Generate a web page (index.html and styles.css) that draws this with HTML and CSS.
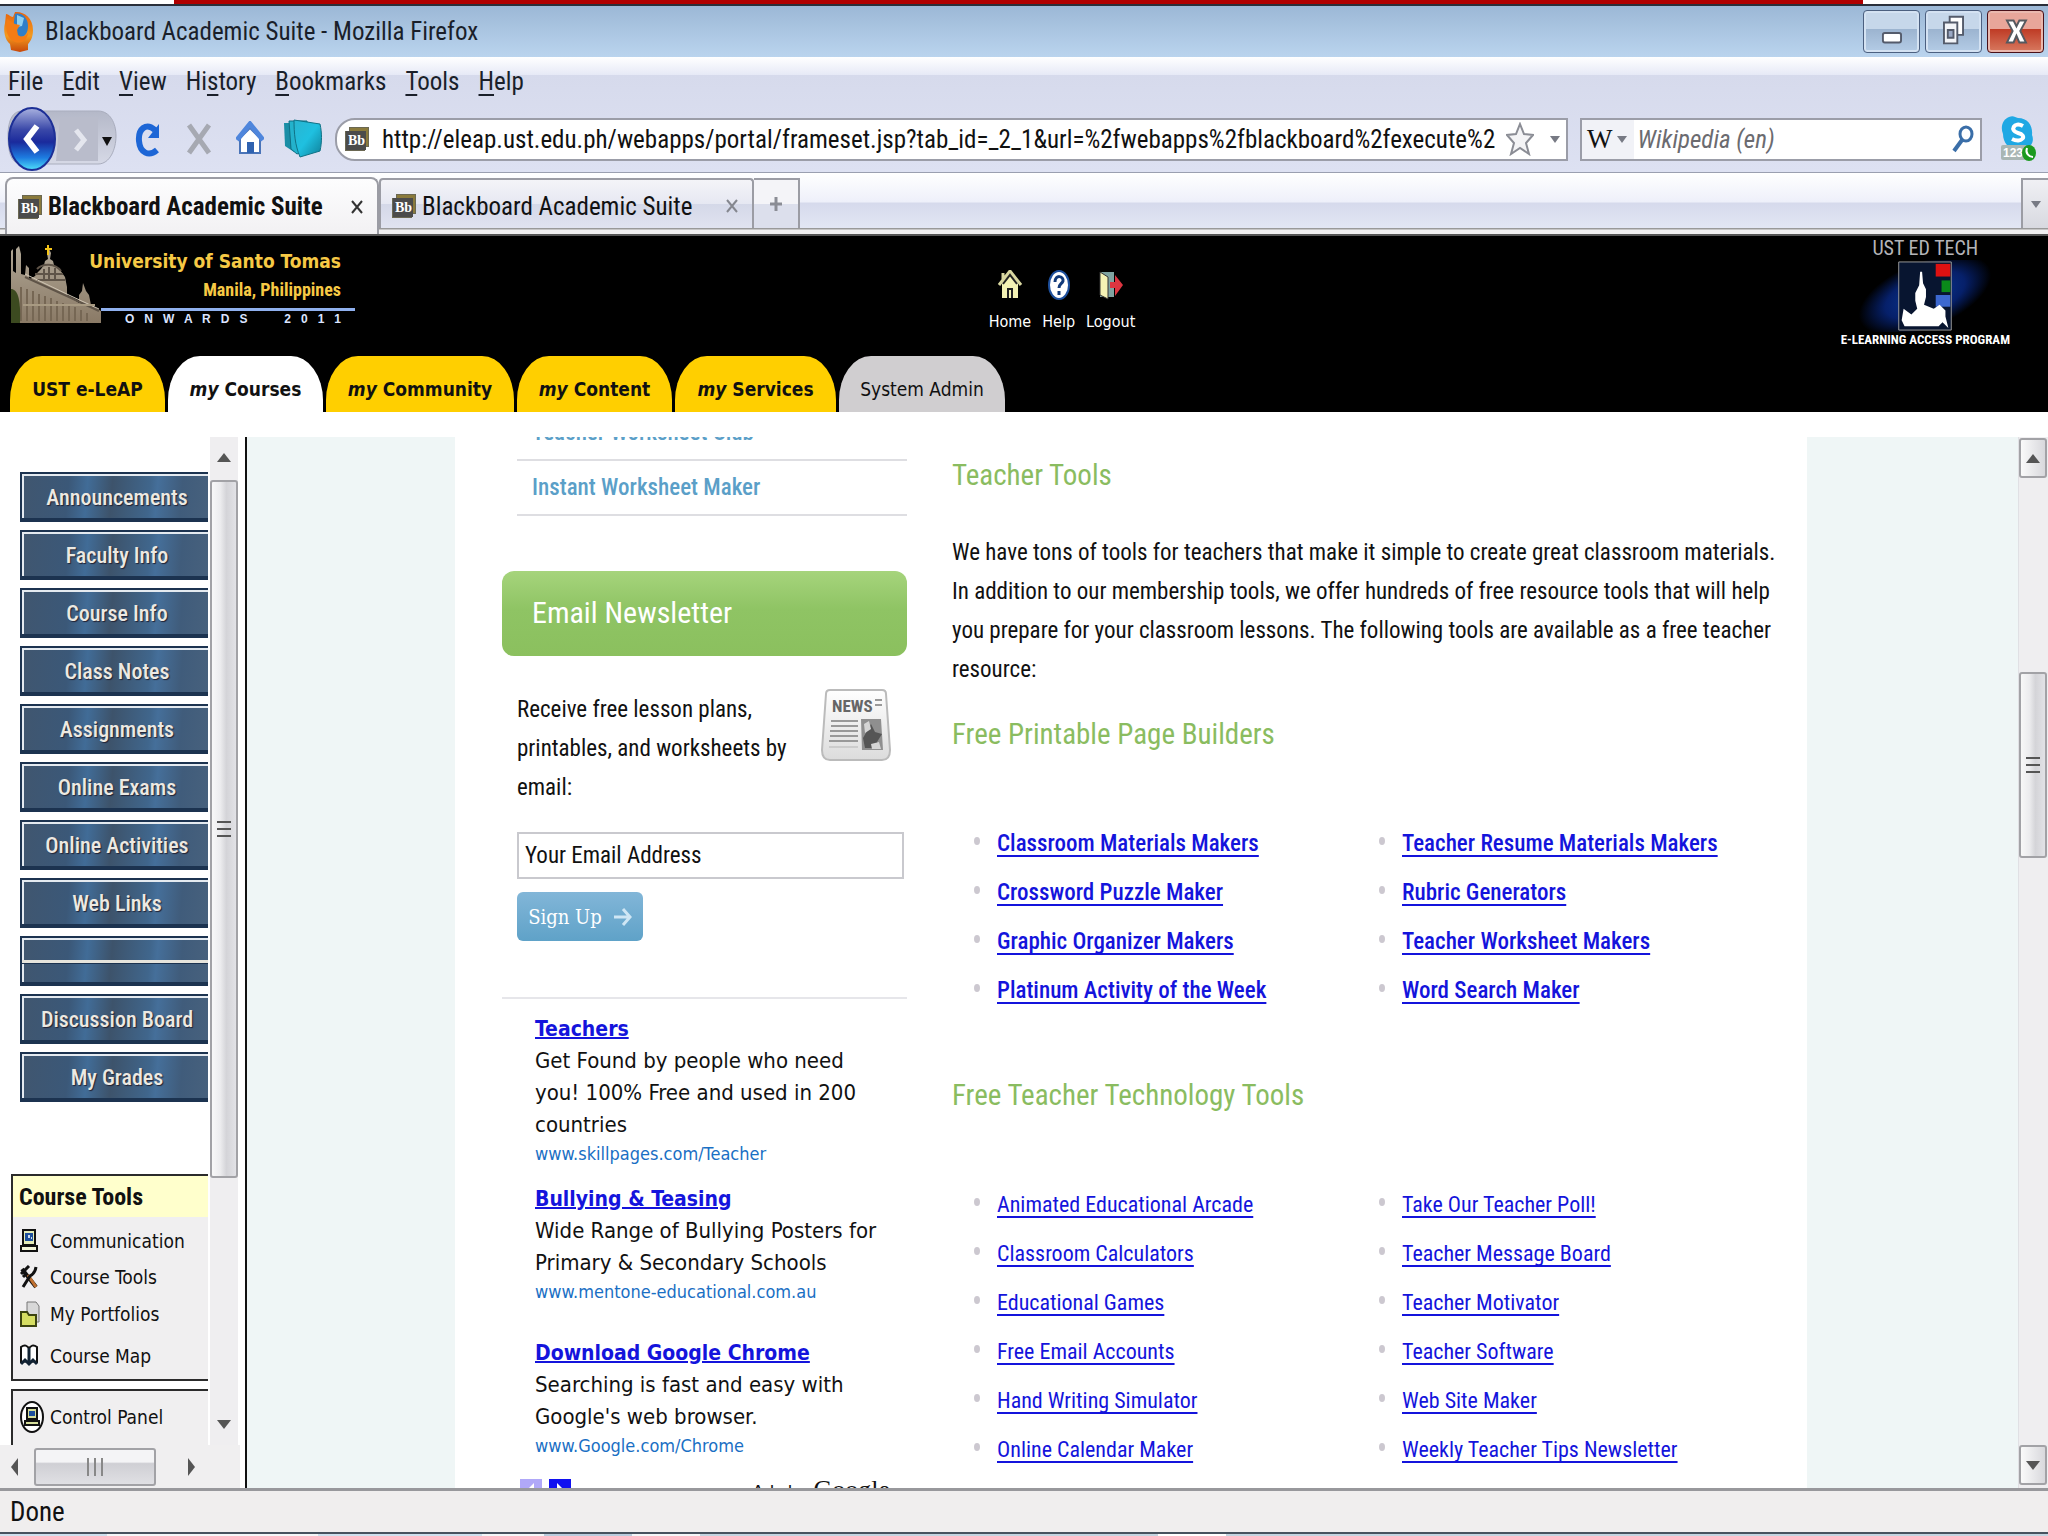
FILE: index.html
```html
<!DOCTYPE html>
<html lang="en">
<head>
<meta charset="utf-8">
<title>Blackboard Academic Suite - Mozilla Firefox</title>
<link rel="stylesheet" href="styles.css">
</head>
<body>
<svg width="0" height="0" class="defs" aria-hidden="true">
  <defs>
    <linearGradient id="orange" x1="0" y1="0" x2="0" y2="1"><stop offset="0" stop-color="#e8640c"/><stop offset=".6" stop-color="#f39a1e"/><stop offset="1" stop-color="#c8480a"/></linearGradient>
    <linearGradient id="orb" x1="0" y1="0" x2="0" y2="1"><stop offset="0" stop-color="#a9b2e0"/><stop offset=".35" stop-color="#3a48a8"/><stop offset=".55" stop-color="#1a2a9c"/><stop offset=".8" stop-color="#1d7be0"/><stop offset="1" stop-color="#4fe0fa"/></linearGradient>
    <linearGradient id="fwd" x1="0" y1="0" x2="0" y2="1"><stop offset="0" stop-color="#b4b8c8"/><stop offset="1" stop-color="#d6d9e6"/></linearGradient>
    <linearGradient id="teal" x1="0" y1="0" x2="1" y2="1"><stop offset="0" stop-color="#2ab4d0"/><stop offset=".5" stop-color="#1fc0e0"/><stop offset="1" stop-color="#0f7f98"/></linearGradient>
    <linearGradient id="stone" x1="0" y1="0" x2="0" y2="1"><stop offset="0" stop-color="#b0a695"/><stop offset="1" stop-color="#8a7a66"/></linearGradient>
    <radialGradient id="glow"><stop offset="0" stop-color="#0a3a9a"/><stop offset=".6" stop-color="#06206a"/><stop offset="1" stop-color="#000"/></radialGradient>
    <linearGradient id="paper" x1="0" y1="0" x2="0" y2="1"><stop offset="0" stop-color="#fff"/><stop offset="1" stop-color="#dcdcdc"/></linearGradient>
    <symbol id="bb" viewBox="0 0 24 24"><path d="M4 0h20v20h-4v4H0V4h4z" fill="#6b6852"/><path d="M5 1h18v18H5z" fill="#8a7a3c"/><path d="M1 4h20v19H1z" fill="#4b4b4b"/><text x="3" y="18" font-family="Liberation Serif, serif" font-weight="700" font-size="14" fill="#fff">Bb</text></symbol>
    <symbol id="pc" viewBox="0 0 18 24"><path d="M3 1h12v15H3z" fill="#e4ecb8" stroke="#111" stroke-width="2"/><path d="M5 4h8v8H5z" fill="#1d4f9c"/><path d="M8 6h2v3H8zM11 8h1v2h-1z" fill="#cde"/><path d="M1 17h16v5H1z" fill="#f2f4d8" stroke="#111" stroke-width="2"/></symbol>
  </defs>
</svg>

<div class="desktop-strip"></div>
<header class="titlebar">
  <svg class="fox" viewBox="0 0 32 42"><path d="M3 3c3 0 4 3 7 3l2-5c8-1 18 5 18 18 0 8-3 12-5 14v6l-8 2-9-2-1-6C2 29 0 20 2 12z" fill="url(#orange)"/><path d="M12 3c6-2 13 3 13 12 0 8-4 11-8 11-5 0-7-4-7-8z" fill="#2f7fc8"/><path d="M14 4l7 3-2 8-5 1z" fill="#8fd0f0"/><path d="M4 8l8 5 5 1-3 5 1 5c4 3 8 1 10-2-1 8-7 11-13 9C4 28 2 18 4 8z" fill="#f47c14"/></svg>
  <h1>Blackboard Academic Suite - Mozilla Firefox</h1>
  <div class="winbtns">
    <button type="button" aria-label="Minimize"><svg viewBox="0 0 56 43"><rect x="19" y="23" width="19" height="10" rx="2" fill="#fff" stroke="#545b6b" stroke-width="2"/></svg></button>
    <button type="button" aria-label="Restore"><svg viewBox="0 0 56 43"><path d="M24 6h14v19H24z" fill="#fff" stroke="#545b6b" stroke-width="2"/><path d="M18 12h14v22H18z" fill="#f2f4f8" stroke="#545b6b" stroke-width="2"/><path d="M22 20h6v8h-6z" fill="#9aa8c4" stroke="#545b6b" stroke-width="2"/></svg></button>
    <button type="button" class="close" aria-label="Close"><svg viewBox="0 0 56 43"><path d="M19 10h7l3 6 3-6h7l-6 11 6 12h-7l-3-7-3 7h-7l6-12z" fill="#fff" stroke="#55595f" stroke-width="2"/></svg></button>
  </div>
</header>

<div class="chrome">
  <nav class="menubar">
    <a href="#"><u>F</u>ile</a><a href="#"><u>E</u>dit</a><a href="#"><u>V</u>iew</a><a href="#">Hi<u>s</u>tory</a><a href="#"><u>B</u>ookmarks</a><a href="#"><u>T</u>ools</a><a href="#"><u>H</u>elp</a>
  </nav>
  <div class="toolbar">
    <button type="button" class="navpair" aria-label="Back and forward"><svg viewBox="0 0 114 66"><path d="M4 30C4 12 10 5 18 5h76c12 0 18 12 18 25s-6 28-18 28H18C8 58 4 48 4 30z" fill="url(#fwd)" stroke="#a9adbd"/><path d="M56 11h38v44H52z" fill="#b9bccb"/><path d="M72 24l8 10-8 10" fill="none" stroke="#e4e6ee" stroke-width="5"/><path d="M98 31h10l-5 9z" fill="#111"/><ellipse cx="28" cy="33" rx="23" ry="31" fill="url(#orb)" stroke="#1c2f96" stroke-width="2"/><path d="M33 20L23 33l10 13" fill="none" stroke="#fff" stroke-width="6"/></svg></button>
    <button type="button" class="tool" aria-label="Reload"><svg viewBox="0 0 26 36"><path d="M20 9C11 1 3 8 4 20c1 12 10 16 18 9" fill="none" stroke="#1d66d6" stroke-width="6"/><path d="M24 3v14H13z" fill="#1d66d6"/></svg></button>
    <button type="button" class="tool" aria-label="Stop"><svg viewBox="0 0 26 36"><path d="M3 4l20 28M23 4L3 32" stroke="#a6a9b2" stroke-width="5"/></svg></button>
    <button type="button" class="tool" aria-label="Home"><svg viewBox="0 0 28 36"><path d="M4 17L14 7l10 10v15H4z" fill="#fff" stroke="#4a74b8" stroke-width="2"/><path d="M1 19L14 3l13 16" fill="none" stroke="#4f86dc" stroke-width="5"/><path d="M11 21h7v11h-7z" fill="#2f62b0"/></svg></button>
    <button type="button" class="tool wide" aria-label="Bookmarks"><svg viewBox="0 0 40 40"><path d="M1 4h20l2 27-12 2-9-6z" fill="#1a8ea6"/><path d="M6 2h18v29l-10 4-6-5z" fill="#23b2cc" stroke="#0f6f84"/><path d="M11 1l26 4c2 9 2 18 0 27l-20 6c-5-12-6-24-6-37z" fill="url(#teal)" stroke="#0f7286"/></svg></button>
    <div class="urlbar">
      <svg class="bb"><use href="#bb"/></svg>
      <input type="text" aria-label="Address" value="http://eleap.ust.edu.ph/webapps/portal/frameset.jsp?tab_id=_2_1&amp;url=%2fwebapps%2fblackboard%2fexecute%2">
      <svg class="star" viewBox="0 0 28 34"><path d="M14 2l4 10 9 1-7 8 3 11-9-6-9 6 3-11-7-8 9-1z" fill="#f4f4f6" stroke="#8b8d95" stroke-width="2"/></svg>
      <svg class="caret" viewBox="0 0 10 8"><path d="M0 1h10L5 8z" fill="#777a84"/></svg>
    </div>
    <div class="search">
      <span class="engine"><b>W</b><svg class="caret" viewBox="0 0 10 8"><path d="M0 1h10L5 8z" fill="#777a84"/></svg></span>
      <input type="text" aria-label="Search" placeholder="Wikipedia (en)">
      <svg class="lens" viewBox="0 0 22 28"><ellipse cx="14" cy="9" rx="6" ry="7" fill="none" stroke="#3a6ea8" stroke-width="3"/><path d="M10 15L2 26" stroke="#3a6ea8" stroke-width="4"/></svg>
    </div>
    <button type="button" class="skype" aria-label="Skype"><svg viewBox="0 0 36 46"><path d="M9 1c4-2 6 0 9 1 10 0 15 8 14 17 3 7-2 14-9 13C12 36 3 29 3 18 0 11 3 3 9 1z" fill="#1fa8e4"/><path d="M23 10c-9-5-14 5-5 7 10 2 4 11-6 6" fill="none" stroke="#fff" stroke-width="4"/><rect x="1" y="29" width="26" height="15" rx="2" fill="#a9b6b4"/><text x="3" y="41" font-family="Liberation Sans, sans-serif" font-weight="700" font-size="12" fill="#fff">123</text><ellipse cx="29" cy="37" rx="7" ry="8" fill="#1b9a1f"/><path d="M27 32c-2 5 2 9 6 9" fill="none" stroke="#fff" stroke-width="2"/></svg></button>
  </div>
</div>

<div class="tabstrip">
  <div class="tab active"><svg class="bb"><use href="#bb"/></svg><span>Blackboard Academic Suite</span><button type="button" aria-label="Close tab"><svg viewBox="0 0 12 14"><path d="M1 1l10 12M11 1L1 13" stroke="#333" stroke-width="2"/></svg></button></div>
  <div class="tab"><svg class="bb"><use href="#bb"/></svg><span>Blackboard Academic Suite</span><button type="button" aria-label="Close tab"><svg viewBox="0 0 12 14"><path d="M1 1l10 12M11 1L1 13" stroke="#85878f" stroke-width="2"/></svg></button></div>
  <button type="button" class="newtab" aria-label="New tab"><svg viewBox="0 0 14 16"><path d="M7 1v14M1 8h12" stroke="#8b8d95" stroke-width="3"/></svg></button>
  <button type="button" class="alltabs" aria-label="List all tabs"><svg class="caret" viewBox="0 0 10 8"><path d="M0 1h10L5 8z" fill="#777a84"/></svg></button>
</div>

<section class="banner">
  <div class="brand">
    <svg class="church" viewBox="0 0 90 78"><path d="M0 6l2-2v22l3 2V4l3-3 2 8v20l4 1 1-10 3 3v12l6-4 3-4 3-3 3-4 1-4 3-2-1-6 2-4 2 4-1 6 3 2 1 4 6 5 5 7 2 10v8l12 8v-8l3-4 1-8 3 8 3 4 2 10 10 6v12H0z" fill="url(#stone)"/><path d="M26 24c6-6 18-6 24 2M24 29h28M26 35h28M33 24v12M38 22v14M44 23v13M14 32l44 20 30 14" fill="none" stroke="#5f5448" stroke-width="2"/><path d="M14 29l46 22 28 13" fill="none" stroke="#cfc5b4"/><path d="M10 42v34M16 44v32M22 46v30M28 49v27M34 51v25M40 53v23M46 56v20M52 58v18M58 60v16M64 62v14M70 65v11M76 68v8" stroke="#766754" stroke-width="2"/><path d="M12 60h72" stroke="#a89a82" stroke-width="2"/><path d="M36 0h2v3h3v2h-3v5h-2V5h-2V3h2z" fill="#f5c518"/><path d="M0 44c6 0 10 8 9 34H0z" fill="#3c4a20"/></svg>
    <div class="brandtext">
      <strong>University of Santo Tomas</strong>
      <b>Manila, Philippines</b>
      <div class="onwards"><span>O   N   W   A   R   D   S</span><span>2   0   1   1</span></div>
    </div>
  </div>
  <nav class="quick">
    <a href="#"><svg viewBox="0 0 24 30"><path d="M4 13l8-10 8 10v15H4z" fill="#f4f2b4"/><path d="M1 15L12 1l11 14M5 3v9" fill="none" stroke="#d9d7a0" stroke-width="3"/><path d="M5 14l7-9 7 9M10 28v-9h4v9" fill="none" stroke="#222" stroke-width="2"/></svg>Home</a>
    <a href="#"><svg viewBox="0 0 24 30"><ellipse cx="12" cy="15" rx="10" ry="14" fill="#fff" stroke="#1d4f9c" stroke-width="2"/><path d="M8 12c0-8 9-6 8-1-1 3-4 3-4 7M12 21v4" fill="none" stroke="#123a7a" stroke-width="3"/></svg>Help</a>
    <a href="#"><svg viewBox="0 0 26 30"><path d="M2 2h14v25H2z" fill="#7fa3a0"/><path d="M2 2l8 5v22l-8-4z" fill="#f4f2b4" stroke="#333"/><path d="M12 12h5V5l8 10-8 11v-8h-5z" fill="#dc3540"/></svg>Logout</a>
  </nav>
  <div class="edtech">
    <span>UST ED TECH</span>
    <svg viewBox="0 0 150 74"><ellipse cx="75" cy="36" rx="72" ry="34" transform="rotate(-22 75 36)" fill="url(#glow)"/><path d="M48 2h54v70H48z" fill="#081530" stroke="#999"/><path d="M86 4h15v13H86z" fill="#d11"/><path d="M92 21h9v12h-9z" fill="#0a8a1a"/><path d="M86 36h15v12H86z" fill="#3c68d0"/><path d="M70 12h2l1 12 3 6v8l-2 8 10 4 6-4 6 6v6l3 12-6-6-4 4H54l-3-6 2-12 8 6 6-6-2-8v-8l4-8z" fill="#fff"/></svg>
    <b>E-LEARNING ACCESS PROGRAM</b>
  </div>
  <nav class="sitetabs">
    <a href="#" class="t1">UST e-LeAP</a><a href="#" class="t1 on"><span><i>my</i> Courses</span></a><a href="#" class="t4"><span><i>my</i> Community</span></a><a href="#" class="t1"><span><i>my</i> Content</span></a><a href="#" class="t2"><span><i>my</i> Services</span></a><a href="#" class="t3 admin">System Admin</a>
  </nav>
</section>

<div class="frames">
  <aside class="side">
    <div class="sidetop">
      <div class="sidecontent">
        <nav class="coursemenu">
          <a href="#">Announcements</a><a href="#">Faculty Info</a><a href="#">Course Info</a><a href="#">Class Notes</a><a href="#">Assignments</a><a href="#">Online Exams</a><a href="#">Online Activities</a><a href="#">Web Links</a><div class="divider"></div><a href="#">Discussion Board</a><a href="#">My Grades</a>
        </nav>
        <section class="box">
          <h2>Course Tools</h2>
          <ul>
            <li><svg viewBox="0 0 18 24"><use href="#pc"/></svg><a href="#">Communication</a></li>
            <li><svg viewBox="0 0 18 24"><path d="M2 4l14 18" stroke="#111" stroke-width="4"/><path d="M8 10l8 12" stroke="#c07030" stroke-width="3"/><path d="M16 2c-1 6-4 8-6 9L3 22M1 9l8-8M3 12l3-3" fill="none" stroke="#111" stroke-width="3"/></svg><a href="#">Course Tools</a></li>
            <li class="tall"><svg viewBox="0 0 20 26"><path d="M7 1h9l3 4v16H7z" fill="#d8d8d8" stroke="#777"/><path d="M1 11h6l2 3h7v11H1z" fill="#d6de62" stroke="#3c4410" stroke-width="2"/></svg><a href="#">My Portfolios</a></li>
            <li><svg viewBox="0 0 18 24"><path d="M1 3c4-3 6-1 8 1 2-2 4-4 8-1v15c-4-1-6-1-8 1-2-2-4-2-8-1z" fill="#fff" stroke="#111" stroke-width="2"/><path d="M9 4v14M1 20l4-4 4 4 4-4 4 4" fill="none" stroke="#123" stroke-width="3"/></svg><a href="#">Course Map</a></li>
          </ul>
        </section>
        <section class="box panel">
          <svg viewBox="0 0 24 32"><ellipse cx="12" cy="16" rx="11" ry="15" fill="#fff" stroke="#111" stroke-width="2"/><path d="M7 7h10v11H7z" fill="#d6de9a" stroke="#111" stroke-width="2"/><path d="M9 10h6v5H9z" fill="#1d4f9c"/><path d="M5 20h14v4H5z" fill="#d6de9a" stroke="#111" stroke-width="2"/></svg><a href="#">Control Panel</a>
        </section>
      </div>
      <div class="vbar left"><i class="arrow up"></i><div class="thumb"></div><i class="arrow down"></i></div>
    </div>
    <div class="hbar"><i class="arrow lt"></i><div class="thumb"></div><i class="arrow rt"></i></div>
  </aside>
  <main class="page">
    <div class="sheet">
      <div class="colleft">
        <ul class="makers"><li><a href="#">Teacher Worksheet Club</a></li><li><a href="#">Instant Worksheet Maker</a></li></ul>
        <h2 class="green">Email Newsletter</h2>
        <form class="signup">
          <div class="blurb"><label for="email">Receive free lesson plans, printables, and worksheets by email:</label>
          <svg viewBox="0 0 70 78"><path d="M9 2h52q4 0 4 4l4 56q0 10-8 10H9q-8 0-8-10L5 6q0-4 4-4z" fill="url(#paper)" stroke="#bbb" stroke-width="2"/><text x="11" y="24" font-family="Roboto Condensed, Liberation Sans, sans-serif" font-weight="700" font-size="17" fill="#666">NEWS</text><path d="M54 12h7M54 17h7M10 33h27M10 38h27M9 43h28M9 48h28M8 53h29" stroke="#999" stroke-width="2"/><path d="M8 59h29" stroke="#ccc" stroke-width="2"/><path d="M40 31h20l2 31H41z" fill="#8f8f8f"/><path d="M42 50l8-14 4 8 7 2-5 8 3 6H44z" fill="#555"/><path d="M43 36l5-3 2 8-6 4zM50 56l8-2 2 7h-9z" fill="#d5d5d5"/></svg></div>
          <input id="email" type="text" value="Your Email Address">
          <button type="button">Sign Up <svg viewBox="0 0 18 20"><path d="M0 10h15M9 2l7 8-7 8" fill="none" stroke="#cfe6f4" stroke-width="3"/></svg></button>
        </form>
        <div class="ads">
          <article><a href="#">Teachers</a><p>Get Found by people who need you! 100% Free and used in 200 countries</p><cite>www.skillpages.com/Teacher</cite></article>
          <article><a href="#">Bullying &amp; Teasing</a><p>Wide Range of Bullying Posters for Primary &amp; Secondary Schools</p><cite>www.mentone-educational.com.au</cite></article>
          <article><a href="#">Download Google Chrome</a><p>Searching is fast and easy with Google's web browser.</p><cite>www.Google.com/Chrome</cite></article>
        </div>
        <div class="adnav"><button type="button" class="dim" aria-label="Previous ads"><svg viewBox="0 0 22 22"><path d="M14 4L7 11l7 7z" fill="#fff"/></svg></button><button type="button" aria-label="Next ads"><svg viewBox="0 0 22 22"><path d="M8 4l7 7-7 7z" fill="#fff"/></svg></button><span><small>Ads by</small> Google</span></div>
      </div>
      <div class="colright">
        <h2>Teacher Tools</h2>
        <p>We have tons of tools for teachers that make it simple to create great classroom materials. In addition to our membership tools, we offer hundreds of free resource tools that will help you prepare for your classroom lessons. The following tools are available as a free teacher resource:</p>
        <h3>Free Printable Page Builders</h3>
        <ul class="links strong">
          <li><a href="#">Classroom Materials Makers</a></li><li><a href="#">Teacher Resume Materials Makers</a></li>
          <li><a href="#">Crossword Puzzle Maker</a></li><li><a href="#">Rubric Generators</a></li>
          <li><a href="#">Graphic Organizer Makers</a></li><li><a href="#">Teacher Worksheet Makers</a></li>
          <li><a href="#">Platinum Activity of the Week</a></li><li><a href="#">Word Search Maker</a></li>
        </ul>
        <h3 class="second">Free Teacher Technology Tools</h3>
        <ul class="links">
          <li><a href="#">Animated Educational Arcade</a></li><li><a href="#">Take Our Teacher Poll!</a></li>
          <li><a href="#">Classroom Calculators</a></li><li><a href="#">Teacher Message Board</a></li>
          <li><a href="#">Educational Games</a></li><li><a href="#">Teacher Motivator</a></li>
          <li><a href="#">Free Email Accounts</a></li><li><a href="#">Teacher Software</a></li>
          <li><a href="#">Hand Writing Simulator</a></li><li><a href="#">Web Site Maker</a></li>
          <li><a href="#">Online Calendar Maker</a></li><li><a href="#">Weekly Teacher Tips Newsletter</a></li>
        </ul>
      </div>
    </div>
  </main>
  <div class="vbar right"><div class="cap"><i class="arrow up"></i></div><div class="thumb"></div><div class="cap"><i class="arrow down"></i></div></div>
</div>
<footer class="status">Done</footer>
<div class="taskbar"></div>
</body>
</html>
```
FILE: styles.css
```css
* { box-sizing: border-box; }
html, body { height: 100%; margin: 0; overflow: hidden; }
body {
  display: flex; flex-direction: column;
  font-family: "Roboto Condensed", "Liberation Sans", sans-serif;
  font-size: 25px; color: #111; background: #fff;
}
body > * { flex: none; }
.defs { position: absolute; }
button, input { font: inherit; color: inherit; border: 0; padding: 0; margin: 0; background: none; }
button { display: flex; align-items: center; justify-content: center; }
svg { display: block; flex: none; }
a { color: inherit; text-decoration: none; }
ul { list-style: none; margin: 0; padding: 0; }
h1, h2, h3, p { margin: 0; font-weight: 400; }
.bb { width: 24px; height: 24px; }
.caret { width: 10px; height: 8px; }

/* browser window */
.desktop-strip {
  height: 6px; border-bottom: 2px solid #2a2f3a;
  background: linear-gradient(90deg, #fff 0 174px, #b00000 174px calc(100% - 185px), #fff calc(100% - 185px));
}
.titlebar {
  display: flex; align-items: center; height: 51px; padding: 0 4px 0 3px; gap: 10px;
  background: linear-gradient(#9cb8d6, #bad4ee);
}
.fox { width: 32px; height: 42px; }
.titlebar h1 { font-size: 25px; flex: 1; color: #1a1f2a; }
.winbtns { display: flex; gap: 5px; }
.winbtns button {
  width: 57px; height: 43px; border: 1px solid #4c6080; border-radius: 4px;
  background: linear-gradient(#c6d7ea 0 45%, #9cb4d0 45%, #b4cce6);
  box-shadow: inset 0 0 0 2px #d4e2f2;
}
.winbtns .close { border-color: #4a1018; background: linear-gradient(#e8a69a 0 45%, #bf3c26 45%, #d87a60); box-shadow: inset 0 0 0 2px #eab8ae; }
.winbtns svg { width: 55px; height: 41px; }
.chrome {
  height: 116px; border-bottom: 1px solid #9a9fb0;
  background: linear-gradient(#fff, #e6e9f6 18px, #d6daec 18px, #dde1f2);
}
.menubar { display: flex; gap: 19px; padding: 9px 8px 0; height: 49px; line-height: 32px; color: #1a1f2a; }
.menubar u { text-underline-offset: 4px; text-decoration-thickness: 2px; }
.toolbar { display: flex; align-items: center; height: 66px; padding: 0 12px 0 4px; }
.navpair svg { width: 114px; height: 66px; }
.navpair { margin-right: 16px; }
.tool { width: 28px; height: 36px; margin-right: 23px; }
.tool svg { width: 28px; height: 36px; }
.tool.wide, .tool.wide svg { width: 40px; height: 40px; }
.tool.wide { margin-left: -4px; margin-right: 12px; }
.urlbar, .search { display: flex; align-items: center; height: 43px; border: 2px solid #9b9da8; background: #fff; }
.urlbar { flex: 1; min-width: 0; border-radius: 20px 0 0 20px; padding: 0 6px 0 8px; }
.urlbar input { flex: 1; min-width: 0; margin: 0 3px 0 13px; }
.star { width: 28px; height: 34px; margin-right: 16px; }
.search { width: 402px; margin: 0 18px 0 12px; padding-right: 6px; }
.engine { display: flex; align-items: center; gap: 5px; height: 39px; padding: 0 7px 0 5px; background: #f1f2f7; }
.engine b { font: 400 27px "Liberation Serif", serif; }
.search input { flex: 1; min-width: 0; margin-left: 3px; font-style: italic; }
.search input::placeholder { color: #6b6b70; opacity: 1; }
.lens { width: 22px; height: 28px; }
.skype svg { width: 36px; height: 46px; }

.tabstrip {
  display: flex; align-items: flex-end; height: 63px; padding: 0 0 6px 5px;
  border-bottom: 2px solid #555;
  background: linear-gradient(#fff, #eef0fa 29px, #d6daec 30px, #e2e6f4 55px, #999 55px 56px, #f1f0f1 57px);
}
.tab {
  display: flex; align-items: center; width: 375px; height: 50px; padding: 4px 14px 0 11px; gap: 6px;
  border: 2px solid #9b9ca4; border-bottom: 0; border-radius: 4px 4px 0 0;
  background: linear-gradient(#f4f4f8, #e6e8f2 50%, #d4d8e8 50%, #e0e3f0);
}
.tab span { flex: 1; }
.tab.active { width: 374px; height: 57px; margin-bottom: -6px; padding-top: 0; border-radius: 8px 8px 0 0; background: linear-gradient(#fdfdfe, #f2f1f3); font-weight: 700; }
.tab button svg { width: 12px; height: 14px; }
.newtab { width: 46px; height: 50px; border: 2px solid #9b9ca4; border-width: 2px 2px 0 0; background: linear-gradient(#f4f4f8 50%, #dcdfec 50%); }
.newtab svg { width: 14px; height: 16px; }
.alltabs { width: 27px; height: 50px; margin-left: auto; border: 2px solid #9b9ca4; border-width: 2px 0 0 2px; background: linear-gradient(#f0f0f4, #d8d9e0); }

/* university banner */
.banner {
  display: grid; grid-template-columns: 1fr auto 1fr; grid-template-rows: 120px 56px;
  height: 176px; background: #000; color: #fff; font-family: "DejaVu Sans Condensed", "DejaVu Sans", sans-serif;
}
.brand { display: flex; padding: 9px 0 0 11px; }
.church { width: 90px; height: 78px; }
.brandtext { display: flex; flex-direction: column; width: 254px; color: #f6c945; }
.brandtext strong, .brandtext b { text-align: right; padding-right: 14px; white-space: nowrap; }
.brandtext strong { font-size: 19px; line-height: 32px; align-self: flex-end; }
.brandtext b { font: 700 18px/26px "Roboto Condensed", sans-serif; height: 31px; }
.onwards {
  display: flex; justify-content: space-between; padding: 0 14px 0 24px; border-top: 3px solid #8fb0ee;
  font: 700 12px/16px "Liberation Sans", sans-serif; color: #dbe4ff; white-space: pre;
}
.quick { display: flex; gap: 11px; padding: 34px 0 0 76px; font-size: 16px; line-height: 24px; }
.quick a { display: flex; flex-direction: column; align-items: center; gap: 10px; }
.quick svg { height: 30px; width: 26px; }
.edtech { display: flex; flex-direction: column; align-items: center; justify-self: end; padding-right: 38px; color: #b4b4b8; }
.edtech span { font: 400 20px/24px "Roboto Condensed", sans-serif; }
.edtech svg { width: 150px; height: 72px; }
.edtech b { font: 700 13px/16px "Roboto Condensed", sans-serif; color: #fff; white-space: nowrap; }
.sitetabs { grid-column: 1 / -1; display: flex; gap: 3px; padding-left: 10px; font-size: 19px; font-weight: 700; color: #111; }
.sitetabs a {
  display: flex; align-items: center; justify-content: center; height: 56px; padding-top: 9px;
  border-radius: 32px 32px 0 0 / 44px 44px 0 0; background: #ffcf00; white-space: nowrap;
}
.t1 { width: 155px; }
.t2 { width: 161px; }
.t3 { width: 166px; }
.t4 { width: 188px; }
.sitetabs .on { background: #fff; }
.sitetabs .admin { background: #d0ced0; font-weight: 400; }

/* frames */
.frames { flex: 1 1 0; min-height: 0; display: flex; padding-top: 25px; }
.side { display: flex; flex-direction: column; width: 247px; border-right: 2px solid #111; }
.sidetop { flex: 1; min-height: 0; display: flex; }
.sidecontent { width: 208px; padding: 35px 0 0 11px; overflow: hidden; font-family: "DejaVu Sans Condensed", "DejaVu Sans", sans-serif; }
.coursemenu { display: flex; flex-direction: column; gap: 8px; margin-left: 9px; }
.coursemenu > * {
  height: 50px; border: solid #1c3350; border-width: 2px 0 4px 2px;
  background: linear-gradient(95deg, #40566f, #3b5878 25%, #416c97 35%, #3d536b 48%, #40668c 68%, #456f9a 72%, #405c7b 85%, #47617d);
  box-shadow: inset 2px 2px 0 #e4eaf0;
}
.coursemenu a { display: flex; align-items: center; justify-content: center; padding: 3px 0 0 4px; font: 500 22px "Roboto Condensed", sans-serif; color: #ece9e2; text-shadow: 1px 1px 1px #223; white-space: nowrap; }
.coursemenu .divider { padding-top: 22px; }
.divider::before { content: ""; display: block; height: 3px; background: #e6e4dc; border-bottom: 1px solid #1c3350; }
.box { border: solid #2b2b2b; border-width: 2px 0 2px 2px; background: #f0eff0; font-size: 19px; white-space: nowrap; }
.coursemenu + .box { margin-top: 72px; }
.box h2 { height: 41px; padding-left: 6px; background: #ffffcc; font: 700 24px/42px "Roboto Condensed", sans-serif; }
.box ul { padding: 6px 0 5px 7px; }
.box li { display: flex; align-items: center; height: 36px; gap: 12px; }
.box li svg { width: 18px; height: 24px; }
.box li.tall { height: 43px; gap: 10px; padding-bottom: 6px; }
.box li.tall svg { width: 20px; height: 26px; }
.panel { display: flex; align-items: center; height: 70px; margin-top: 8px; padding: 0 0 14px 7px; gap: 6px; }
.panel svg { width: 24px; height: 32px; }

.vbar { display: flex; flex-direction: column; align-items: center; justify-content: space-between; background: #efeef0; }
.thumb { border: 2px solid #a2a2a6; border-radius: 3px; display: flex; align-items: center; justify-content: center; }
.vbar .thumb { width: 100%; background: linear-gradient(90deg, #f8f8f8, #ececee 35%, #d4d4d8 60%, #e2e2e6); }
.vbar .thumb::before { content: ""; width: 14px; height: 16px; background: repeating-linear-gradient(#555 0 2px, transparent 2px 7px); }
.left { width: 28px; margin-left: 2px; padding: 16px 0; }
.left .thumb { flex: 1; margin: 18px 0 242px; }
.right { width: 30px; border-left: 1px solid #e0e0e4; padding: 1px 1px 3px 0; }
.right .thumb { height: 186px; margin: 194px 0 auto; }
.cap { display: flex; align-items: center; justify-content: center; width: 100%; height: 40px; border: 2px solid #a2a2a6; border-radius: 3px; background: linear-gradient(90deg, #fafafa, #d8d8dc); }
.arrow { width: 0; height: 0; border: 7px solid transparent; }
.up { border-bottom: 9px solid #555; border-top: 0; }
.down { border-top: 9px solid #555; border-bottom: 0; }
.lt, .rt { border-width: 9px 7px; }
.lt { border-right-color: #555; border-left: 0; }
.rt { border-left-color: #555; border-right: 0; }
.hbar { display: flex; align-items: center; height: 43px; width: 240px; padding: 2px 45px 2px 11px; background: #f0eff0; }
.hbar .thumb { width: 122px; height: 38px; margin: 0 auto 0 16px; background: linear-gradient(#f4f4f6 35%, #cfcfd4 40%, #e0e0e4); }
.hbar .thumb::before { content: ""; width: 16px; height: 18px; background: repeating-linear-gradient(90deg, #888 0 2px, transparent 2px 7px); }

.page { flex: 1; min-width: 0; padding: 0 211px 0 208px; background: #eff6f6; overflow: hidden; }
.sheet { display: flex; gap: 45px; height: 100%; padding: 0 25px 0 47px; background: #fff; }
.colleft { width: 405px; flex: none; margin-top: -31px; }
.makers { padding-left: 15px; }
.makers li { height: 55px; padding-left: 15px; border-bottom: 2px solid #dedee2; font-size: 23px; line-height: 54px; color: #5b9fc8; font-weight: 500; }
.green { height: 85px; margin-top: 55px; padding-left: 30px; border-radius: 12px; background: linear-gradient(#a6d47c, #8fc464 45%, #8bc05e); color: #fff; font-size: 30px; line-height: 84px; }
.signup { padding: 34px 3px 56px 15px; border-bottom: 2px solid #e6e6ea; }
.blurb { display: flex; justify-content: space-between; padding-right: 13px; height: 117px; }
.blurb label { width: 275px; font-size: 23px; line-height: 39px; }
.blurb svg { width: 70px; height: 78px; margin-top: -2px; }
.signup input { width: 100%; height: 47px; margin-top: 25px; padding: 0 6px; border: 2px solid #c9c9ce; font-size: 23px; }
.signup button { width: 126px; height: 49px; margin-top: 13px; gap: 12px; border-radius: 6px; background: linear-gradient(#82b6d8, #5fa2c8); color: #fff; font: 400 20px "DejaVu Serif Condensed", "DejaVu Serif", serif; white-space: nowrap; }
.signup button svg { width: 18px; height: 20px; }
.ads { padding: 14px 0 0 33px; font: 22px/32px "DejaVu Sans Condensed", "DejaVu Sans", sans-serif; }
.ads article { margin-bottom: 16px; }
.ads article:nth-child(2) { margin-bottom: 32px; }
.ads a { display: block; font-size: 21px; color: #1414dc; font-weight: 700; text-decoration: underline; text-decoration-thickness: 2px; }
.ads p { max-width: 345px; }
.ads cite { display: block; font-style: normal; font-size: 18px; line-height: 26px; color: #1a6fc4; }
.adnav { display: flex; gap: 7px; padding: 4px 17px 0 18px; }
.adnav button { width: 22px; height: 22px; background: #1010f0; }
.adnav .dim { background: #b0a8f8; }
.adnav svg { width: 22px; height: 22px; }
.adnav span { margin-left: auto; font: 26px/22px "Liberation Serif", serif; }
.adnav small { font: 18px/22px "Liberation Sans", sans-serif; }
.colright { flex: 1; min-width: 0; padding-top: 18px; }
.colright h2, .colright h3 { color: #8abc60; line-height: 40px; font-size: 29px; }
.colright h3 { margin-top: 25px; }
.colright .second { margin-top: 60px; }
.colright p { margin-top: 38px; max-width: 830px; font-size: 23px; line-height: 39px; }
.links { display: grid; grid-template-columns: 405px 405px; grid-auto-rows: 49px; margin-top: 65px; font-size: 22px; line-height: 49px; color: #1414dc; }
.links.strong { font-size: 23px; font-weight: 500; }
.links li { display: flex; align-items: center; padding-left: 22px; gap: 17px; }
.links li::before { content: ""; width: 6px; height: 8px; margin-bottom: 6px; border-radius: 50%; background: #ccc8d0; }
.links a { text-decoration: underline; text-decoration-thickness: 2px; text-underline-offset: 4px; text-decoration-skip-ink: none; }

.status { height: 44px; padding-left: 10px; border-top: 3px solid #98989c; background: #f0eeee; font-size: 27px; line-height: 42px; }
.taskbar { height: 4px; border-top: 2px solid #46525e; background: linear-gradient(90deg, #cfe0ee 107px, #f4f6f8 107px 318px, #cfe0ee 318px 482px, #f4f6f8 482px 544px, #bcd 544px 632px, #f4f6f8 632px 700px, #c4d4e0 700px 1158px, #fff 1158px 1226px, #c4d4e0 1226px); }
```
